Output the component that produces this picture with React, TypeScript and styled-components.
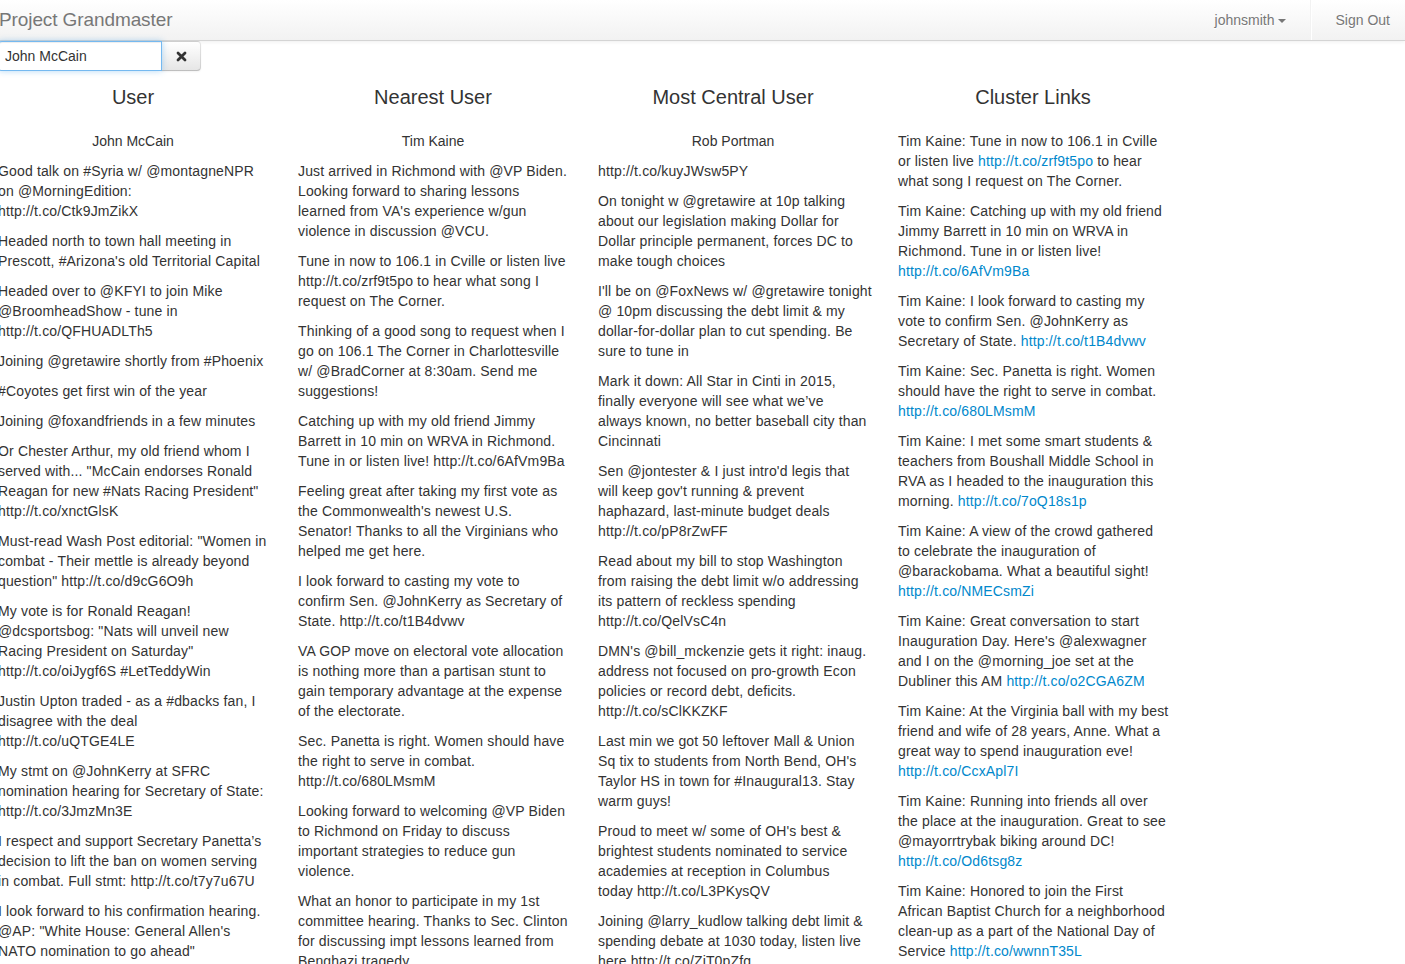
import React from "react";
import styled, { createGlobalStyle } from "styled-components";

const GlobalStyle = createGlobalStyle`
  html, body {
    margin: 0;
    padding: 0;
    background: #ffffff;
    overflow: hidden;
  }
  body {
    font-family: "Liberation Sans", Arial, sans-serif;
    font-size: 14px;
    line-height: 20px;
    color: #333333;
  }
`;

type Column = {
  title: string;
  name?: string;
  tweets: string[][];
};

const columns: Column[] = [
  {
    title: "User",
    name: "John McCain",
    tweets: [
      ["Good talk on #Syria w/ @montagneNPR", "on @MorningEdition:", "http://t.co/Ctk9JmZikX"],
      ["Headed north to town hall meeting in", "Prescott, #Arizona's old Territorial Capital"],
      ["Headed over to @KFYI to join Mike", "@BroomheadShow - tune in", "http://t.co/QFHUADLTh5"],
      ["Joining @gretawire shortly from #Phoenix"],
      ["#Coyotes get first win of the year"],
      ["Joining @foxandfriends in a few minutes"],
      [
        "Or Chester Arthur, my old friend whom I",
        'served with... "McCain endorses Ronald',
        'Reagan for new #Nats Racing President"',
        "http://t.co/xnctGlsK",
      ],
      [
        'Must-read Wash Post editorial: "Women in',
        "combat - Their mettle is already beyond",
        'question" http://t.co/d9cG6O9h',
      ],
      [
        "My vote is for Ronald Reagan!",
        '@dcsportsbog: "Nats will unveil new',
        'Racing President on Saturday"',
        "http://t.co/oiJygf6S #LetTeddyWin",
      ],
      ["Justin Upton traded - as a #dbacks fan, I", "disagree with the deal", "http://t.co/uQTGE4LE"],
      ["My stmt on @JohnKerry at SFRC", "nomination hearing for Secretary of State:", "http://t.co/3JmzMn3E"],
      [
        "I respect and support Secretary Panetta\u2019s",
        "decision to lift the ban on women serving",
        "in combat. Full stmt: http://t.co/t7y7u67U",
      ],
      [
        "I look forward to his confirmation hearing.",
        '@AP: "White House: General Allen\'s',
        'NATO nomination to go ahead"',
      ],
    ],
  },
  {
    title: "Nearest User",
    name: "Tim Kaine",
    tweets: [
      [
        "Just arrived in Richmond with @VP Biden.",
        "Looking forward to sharing lessons",
        "learned from VA's experience w/gun",
        "violence in discussion @VCU.",
      ],
      ["Tune in now to 106.1 in Cville or listen live", "http://t.co/zrf9t5po to hear what song I", "request on The Corner."],
      [
        "Thinking of a good song to request when I",
        "go on 106.1 The Corner in Charlottesville",
        "w/ @BradCorner at 8:30am. Send me",
        "suggestions!",
      ],
      [
        "Catching up with my old friend Jimmy",
        "Barrett in 10 min on WRVA in Richmond.",
        "Tune in or listen live! http://t.co/6AfVm9Ba",
      ],
      [
        "Feeling great after taking my first vote as",
        "the Commonwealth's newest U.S.",
        "Senator! Thanks to all the Virginians who",
        "helped me get here.",
      ],
      ["I look forward to casting my vote to", "confirm Sen. @JohnKerry as Secretary of", "State. http://t.co/t1B4dvwv"],
      [
        "VA GOP move on electoral vote allocation",
        "is nothing more than a partisan stunt to",
        "gain temporary advantage at the expense",
        "of the electorate.",
      ],
      ["Sec. Panetta is right. Women should have", "the right to serve in combat.", "http://t.co/680LMsmM"],
      [
        "Looking forward to welcoming @VP Biden",
        "to Richmond on Friday to discuss",
        "important strategies to reduce gun",
        "violence.",
      ],
      [
        "What an honor to participate in my 1st",
        "committee hearing. Thanks to Sec. Clinton",
        "for discussing impt lessons learned from",
        "Benghazi tragedy.",
      ],
    ],
  },
  {
    title: "Most Central User",
    name: "Rob Portman",
    tweets: [
      ["http://t.co/kuyJWsw5PY"],
      [
        "On tonight w @gretawire at 10p talking",
        "about our legislation making Dollar for",
        "Dollar principle permanent, forces DC to",
        "make tough choices",
      ],
      [
        "I'll be on @FoxNews w/ @gretawire tonight",
        "@ 10pm discussing the debt limit & my",
        "dollar-for-dollar plan to cut spending. Be",
        "sure to tune in",
      ],
      [
        "Mark it down: All Star in Cinti in 2015,",
        "finally everyone will see what we\u2019ve",
        "always known, no better baseball city than",
        "Cincinnati",
      ],
      [
        "Sen @jontester & I just intro'd legis that",
        "will keep gov't running & prevent",
        "haphazard, last-minute budget deals",
        "http://t.co/pP8rZwFF",
      ],
      [
        "Read about my bill to stop Washington",
        "from raising the debt limit w/o addressing",
        "its pattern of reckless spending",
        "http://t.co/QelVsC4n",
      ],
      [
        "DMN's @bill_mckenzie gets it right: inaug.",
        "address not focused on pro-growth Econ",
        "policies or record debt, deficits.",
        "http://t.co/sClKKZKF",
      ],
      [
        "Last min we got 50 leftover Mall & Union",
        "Sq tix to students from North Bend, OH's",
        "Taylor HS in town for #Inaugural13. Stay",
        "warm guys!",
      ],
      [
        "Proud to meet w/ some of OH's best &",
        "brightest students nominated to service",
        "academies at reception in Columbus",
        "today http://t.co/L3PKysQV",
      ],
      [
        "Joining @larry_kudlow talking debt limit &",
        "spending debate at 1030 today, listen live",
        "here http://t.co/ZiT0pZfq",
      ],
    ],
  },
];

type ClusterLink = { lines: string[]; url: string };

const clusterLinks: ClusterLink[] = [
  {
    lines: ["Tim Kaine: Tune in now to 106.1 in Cville", "or listen live {url} to hear", "what song I request on The Corner."],
    url: "http://t.co/zrf9t5po",
  },
  {
    lines: [
      "Tim Kaine: Catching up with my old friend",
      "Jimmy Barrett in 10 min on WRVA in",
      "Richmond. Tune in or listen live!",
      "{url}",
    ],
    url: "http://t.co/6AfVm9Ba",
  },
  {
    lines: ["Tim Kaine: I look forward to casting my", "vote to confirm Sen. @JohnKerry as", "Secretary of State. {url}"],
    url: "http://t.co/t1B4dvwv",
  },
  {
    lines: ["Tim Kaine: Sec. Panetta is right. Women", "should have the right to serve in combat.", "{url}"],
    url: "http://t.co/680LMsmM",
  },
  {
    lines: [
      "Tim Kaine: I met some smart students &",
      "teachers from Boushall Middle School in",
      "RVA as I headed to the inauguration this",
      "morning. {url}",
    ],
    url: "http://t.co/7oQ18s1p",
  },
  {
    lines: [
      "Tim Kaine: A view of the crowd gathered",
      "to celebrate the inauguration of",
      "@barackobama. What a beautiful sight!",
      "{url}",
    ],
    url: "http://t.co/NMECsmZi",
  },
  {
    lines: [
      "Tim Kaine: Great conversation to start",
      "Inauguration Day. Here's @alexwagner",
      "and I on the @morning_joe set at the",
      "Dubliner this AM {url}",
    ],
    url: "http://t.co/o2CGA6ZM",
  },
  {
    lines: [
      "Tim Kaine: At the Virginia ball with my best",
      "friend and wife of 28 years, Anne. What a",
      "great way to spend inauguration eve!",
      "{url}",
    ],
    url: "http://t.co/CcxApl7I",
  },
  {
    lines: [
      "Tim Kaine: Running into friends all over",
      "the place at the inauguration. Great to see",
      "@mayorrtrybak biking around DC!",
      "{url}",
    ],
    url: "http://t.co/Od6tsg8z",
  },
  {
    lines: [
      "Tim Kaine: Honored to join the First",
      "African Baptist Church for a neighborhood",
      "clean-up as a part of the National Day of",
      "Service {url}",
    ],
    url: "http://t.co/wwnnT35L",
  },
];

/* ---------- Navbar ---------- */

const Navbar = styled.header`
  display: flex;
  align-items: stretch;
  justify-content: space-between;
  height: 40px;
  background: linear-gradient(to bottom, #ffffff, #f2f2f2);
  border-bottom: 1px solid #d4d4d4;
  box-shadow: 0 1px 4px rgba(0, 0, 0, 0.065);
`;

const Brand = styled.a`
  display: block;
  padding: 10px 0;
  font-size: 19px;
  line-height: 20px;
  font-weight: 200;
  color: #777777;
  text-decoration: none;
  margin-left: -1px;
  letter-spacing: -0.1px;
`;

const NavRight = styled.nav`
  display: flex;
  align-items: stretch;
`;

const NavLink = styled.a`
  display: flex;
  align-items: center;
  padding: 0 15px;
  color: #777777;
  font-size: 14px;
  text-decoration: none;
  text-shadow: 0 1px 0 #ffffff;
`;

const Caret = styled.span`
  display: inline-block;
  width: 0;
  height: 0;
  margin-left: 3px;
  margin-top: 1px;
  border-top: 4px solid #777777;
  border-left: 4px solid transparent;
  border-right: 4px solid transparent;
`;

const VerticalDivider = styled.span`
  width: 0;
  margin: 0 9px;
  border-left: 1px solid #f2f2f2;
  border-right: 1px solid #ffffff;
`;

/* ---------- Search ---------- */

const SearchBar = styled.form`
  display: flex;
  margin: 0 0 0 -2px;
  height: 30px;
`;

const SearchInput = styled.input`
  box-sizing: border-box;
  width: 164px;
  height: 30px;
  padding: 4px 6px;
  font-family: "Liberation Sans", Arial, sans-serif;
  font-size: 14px;
  color: #333333;
  border: 1px solid rgba(82, 168, 236, 0.8);
  border-radius: 4px 0 0 4px;
  outline: none;
  box-shadow: inset 0 1px 1px rgba(0, 0, 0, 0.075), 0 0 6px rgba(82, 168, 236, 0.45);
  position: relative;
  z-index: 1;
`;

const ClearButton = styled.button`
  box-sizing: border-box;
  width: 40px;
  height: 30px;
  margin-left: -1px;
  display: flex;
  align-items: center;
  justify-content: center;
  background: linear-gradient(to bottom, #ffffff, #e6e6e6);
  border: 1px solid #cccccc;
  border-color: rgba(0, 0, 0, 0.1) rgba(0, 0, 0, 0.1) rgba(0, 0, 0, 0.25);
  border-radius: 0 4px 4px 0;
  box-shadow: inset 0 1px 0 rgba(255, 255, 255, 0.2), 0 1px 2px rgba(0, 0, 0, 0.05);
  padding: 0;
`;

/* ---------- Columns ---------- */

const Row = styled.main`
  display: grid;
  grid-template-columns: repeat(4, 270px);
  column-gap: 30px;
  margin-left: -2px;
`;

const Col = styled.section`
  display: flex;
  flex-direction: column;
`;

const ColTitle = styled.h3`
  margin: 9px 0 17px;
  font-size: 20px;
  line-height: 34px;
  font-weight: 400;
  color: #333333;
  text-align: center;
`;

const UserName = styled.p`
  margin: 0 0 10px;
  text-align: center;
`;

const Tweet = styled.p`
  margin: 0 0 10px;
  letter-spacing: 0.15px;
  white-space: nowrap;
`;

const Line = styled.span`
  display: block;
`;

const Link = styled.a`
  color: #0088cc;
  text-decoration: none;
`;

function ClearIcon() {
  return (
    <svg width="11" height="11" viewBox="0 0 11 11">
      <path d="M2 2 L9 9 M9 2 L2 9" stroke="#333333" strokeWidth="2.8" strokeLinecap="round" />
    </svg>
  );
}

function ClusterLine({ text, url }: { text: string; url: string }) {
  const parts = text.split("{url}");
  return (
    <Line>
      {parts.map((part, i) => (
        <React.Fragment key={i}>
          {part}
          {i < parts.length - 1 && <Link href="#">{url}</Link>}
        </React.Fragment>
      ))}
    </Line>
  );
}

export default function App() {
  return (
    <>
      <GlobalStyle />
      <Navbar>
        <Brand href="#">Project Grandmaster</Brand>
        <NavRight>
          <NavLink href="#">
            johnsmith
            <Caret />
          </NavLink>
          <VerticalDivider />
          <NavLink href="#">Sign Out</NavLink>
        </NavRight>
      </Navbar>
      <SearchBar onSubmit={(e) => e.preventDefault()}>
        <SearchInput defaultValue="John McCain" />
        <ClearButton type="button">
          <ClearIcon />
        </ClearButton>
      </SearchBar>
      <Row>
        {columns.map((col) => (
          <Col key={col.title}>
            <ColTitle>{col.title}</ColTitle>
            {col.name && <UserName>{col.name}</UserName>}
            {col.tweets.map((lines, i) => (
              <Tweet key={i}>
                {lines.map((l, j) => (
                  <Line key={j}>{l}</Line>
                ))}
              </Tweet>
            ))}
          </Col>
        ))}
        <Col>
          <ColTitle>Cluster Links</ColTitle>
          {clusterLinks.map((c, i) => (
            <Tweet key={i}>
              {c.lines.map((l, j) => (
                <ClusterLine key={j} text={l} url={c.url} />
              ))}
            </Tweet>
          ))}
        </Col>
      </Row>
    </>
  );
}
